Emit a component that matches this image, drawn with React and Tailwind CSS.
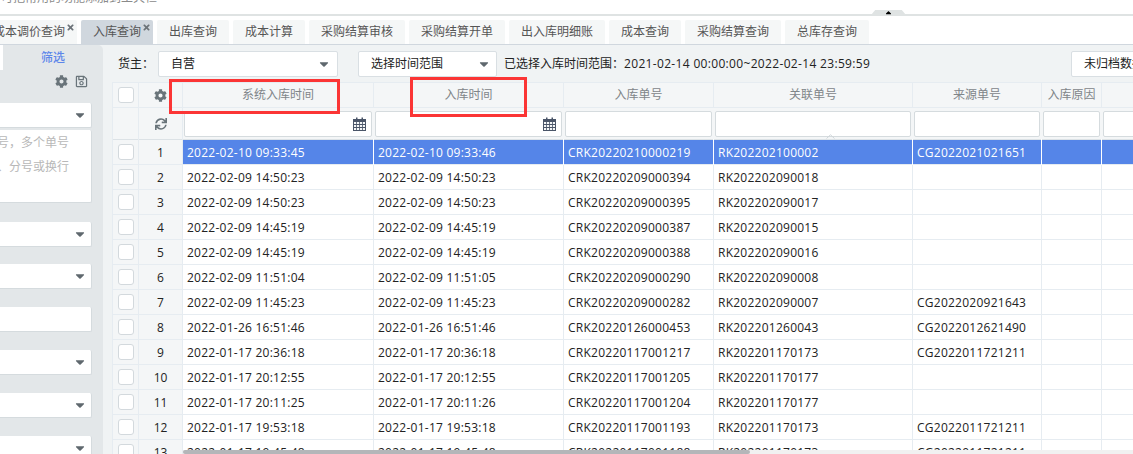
import React from 'react';
import { FaCog, FaRegSave, FaSync, FaCaretDown, FaCaretUp, FaTimes } from 'react-icons/fa';

const tabs = [
  { label: '成本调价查询', width: 'w-[96px]', close: true },
  { label: '入库查询', width: 'w-[72px]', close: true, active: true },
  { label: '出库查询', width: 'w-[72px]' },
  { label: '成本计算', width: 'w-[72px]' },
  { label: '采购结算审核', width: 'w-[96px]' },
  { label: '采购结算开单', width: 'w-[96px]' },
  { label: '出入库明细账', width: 'w-[96px]' },
  { label: '成本查询', width: 'w-[72px]' },
  { label: '采购结算查询', width: 'w-[96px]' },
  { label: '总库存查询', width: 'w-[84px]' },
];

const rows = [
  ['2022-02-10 09:33:45', '2022-02-10 09:33:46', 'CRK20220210000219', 'RK202202100002', 'CG2022021021651'],
  ['2022-02-09 14:50:23', '2022-02-09 14:50:23', 'CRK20220209000394', 'RK202202090018', ''],
  ['2022-02-09 14:50:23', '2022-02-09 14:50:23', 'CRK20220209000395', 'RK202202090017', ''],
  ['2022-02-09 14:45:19', '2022-02-09 14:45:19', 'CRK20220209000387', 'RK202202090015', ''],
  ['2022-02-09 14:45:19', '2022-02-09 14:45:19', 'CRK20220209000388', 'RK202202090016', ''],
  ['2022-02-09 11:51:04', '2022-02-09 11:51:05', 'CRK20220209000290', 'RK202202090008', ''],
  ['2022-02-09 11:45:23', '2022-02-09 11:45:23', 'CRK20220209000282', 'RK202202090007', 'CG2022020921643'],
  ['2022-01-26 16:51:46', '2022-01-26 16:51:46', 'CRK20220126000453', 'RK202201260043', 'CG2022012621490'],
  ['2022-01-17 20:36:18', '2022-01-17 20:36:18', 'CRK20220117001217', 'RK202201170173', 'CG2022011721211'],
  ['2022-01-17 20:12:55', '2022-01-17 20:12:55', 'CRK20220117001205', 'RK202201170177', ''],
  ['2022-01-17 20:11:25', '2022-01-17 20:11:26', 'CRK20220117001204', 'RK202201170177', ''],
  ['2022-01-17 19:53:18', '2022-01-17 19:53:18', 'CRK20220117001193', 'RK202201170173', 'CG2022011721211'],
  ['2022-01-17 19:45:48', '2022-01-17 19:45:48', 'CRK20220117001188', 'RK202201170173', 'CG2022011721211'],
];

const headers = ['系统入库时间', '入库时间', '入库单号', '关联单号', '来源单号', '入库原因', '收'];
const colWidths = ['w-[191px]', 'w-[190px]', 'w-[150px]', 'w-[199px]', 'w-[129px]', 'w-[60px]', 'w-[100px]'];

const Caret = () => <FaCaretDown className="shrink-0 text-[14px] text-[#5f686e]" />;

const CalendarIcon = () => (
  <svg width="13" height="14" viewBox="0 0 13 14" className="shrink-0 text-[#4a5568]">
    <path d="M0 2h13v12H0z" fill="currentColor" />
    <path d="M3 0.5h1.5v3H3zM8.5 0.5H10v3H8.5z" fill="currentColor" />
    <path d="M1 5h2.2v2H1zM4 5h2.2v2H4zM7 5h2.2v2H7zM10 5h2v2h-2zM1 8h2.2v2H1zM4 8h2.2v2H4zM7 8h2.2v2H7zM10 8h2v2h-2zM1 11h2.2v2H1zM4 11h2.2v2H4zM7 11h2.2v2H7zM10 11h2v2h-2z" fill="#f4f6f7" />
  </svg>
);

const SideSelect = ({ className }) => (
  <div className={`flex h-[25px] shrink-0 items-center justify-end rounded-r-[2px] border-r border-b border-[#d5dbde] bg-white pr-[4px] ${className}`}>
    <Caret />
  </div>
);

const Sidebar = () => (
  <div className="relative flex h-full w-[103px] shrink-0 flex-col rounded-tr-[5px] bg-[#e3e7e9]">
    <div className="flex h-[25px] shrink-0 items-center">
      <div className="h-full w-[3px] bg-white" />
      <div className="flex-1 pr-[38px] pl-[38px] text-[12px] font-medium whitespace-nowrap text-[#5d86ea]">筛选</div>
    </div>
    <div className="mt-[5px] flex h-[13px] shrink-0 justify-end gap-[7px] pr-[15px] text-[13px] text-[#69747a]">
      <FaCog />
      <FaRegSave />
    </div>
    <div className="mt-[15px] mr-[11px] flex shrink-0 flex-col">
      <SideSelect />
      <div className="mt-[2px] flex h-[73px] shrink-0 flex-col items-end rounded-r-[2px] border-r border-b border-[#d5dbde] bg-white pt-[1px] pr-[22px] text-[12px] leading-[24px] whitespace-nowrap text-[#b8b8b8]">
        <span>请输入单号，多个单号</span>
        <span>之间用逗号、分号或换行</span>
      </div>
      <SideSelect className="mt-[19px]" />
      <SideSelect className="mt-[17px]" />
      <div className="mt-[18px] h-[25px] shrink-0 rounded-r-[2px] border-r border-b border-[#d5dbde] bg-white" />
      <SideSelect className="mt-[18px]" />
      <SideSelect className="mt-[18px]" />
      <SideSelect className="mt-[18px]" />
    </div>
  </div>
);

const Toolbar = () => (
  <div className="flex h-[37px] shrink-0 items-center pt-[1px] text-[12px] whitespace-nowrap text-[#222]">
    <span className="ml-[6px] w-[40px] shrink-0">货主：</span>
    <div className="flex h-[26px] w-[180px] shrink-0 items-center justify-between rounded-[2px] border border-[#d9dfe3] bg-white pr-[6px] pl-[12px]">
      <span>自营</span>
      <Caret />
    </div>
    <div className="ml-[20px] flex h-[26px] w-[139px] shrink-0 items-center justify-between rounded-[2px] border border-[#d9dfe3] bg-white pr-[5px] pl-[12px]">
      <span>选择时间范围</span>
      <Caret />
    </div>
    <span className="ml-[7px] w-[567px] shrink-0">
      已选择入库时间范围：<span className="tracking-[0.33px]">2021-02-14 00:00:00~2022-02-14 23:59:59</span>
    </span>
    <div className="flex h-[26px] w-[100px] shrink-0 items-center rounded-[2px] border border-[#d9dfe3] bg-white pl-[12px]">未归档数据</div>
  </div>
);

const Checkbox = () => <div className="mx-auto h-[16px] w-[16px] rounded-[3px] border border-[#d3d9dd] bg-white" />;

const DataTable = () => (
  <table className="w-[1089px] max-w-none shrink-0 table-fixed border-collapse text-[12px]">
    <colgroup>
      <col className="w-[26px]" />
      <col className="w-[44px]" />
      {colWidths.map((w) => <col key={w} className={w} />)}
    </colgroup>
    <thead className="bg-[#f4f6f7] font-normal text-[#7f8589]">
      <tr className="h-[25px] border-y border-[#e6ecf1]">
        <th className="border-x border-[#e6ecf1] font-normal"><Checkbox /></th>
        <th className="border-r border-[#e6ecf1] font-normal"><FaCog className="mx-auto text-[13px] text-[#69747a]" /></th>
        {headers.map((h) => (
          <th key={h} className="overflow-hidden border-r border-[#e6ecf1] font-normal whitespace-nowrap">{h}</th>
        ))}
      </tr>
      <tr className="h-[32px] border-b border-[#dce2e6]">
        <th className="border-x border-[#e6ecf1]" />
        <th className="border-r border-[#e6ecf1]"><FaSync className="mx-auto text-[12px] text-[#69747a]" /></th>
        {headers.map((h, i) => (
          <th key={h} className="pr-[2px] pl-[1px] align-middle font-normal">
            <div className="flex h-[26px] items-center justify-end rounded-[2px] border border-[#d5dbde] bg-white pr-[5px]">
              {i < 2 && <CalendarIcon />}
            </div>
          </th>
        ))}
      </tr>
    </thead>
    <tbody>
      {rows.map((row, i) => (
        <tr key={i} className="h-[25px] border-b border-[#e6ecf1]">
          <td className="border-x border-[#e6ecf1] bg-[#f4f6f7]"><Checkbox /></td>
          <td className="border-r border-[#e6ecf1] bg-[#f4f6f7] pt-[1px] text-center text-[#222]">{i + 1}</td>
          {[...row, '', ''].map((cell, j) => (
            <td
              key={j}
              className={
                i === 0
                  ? 'border-r border-white bg-[#5585e8] pt-[1px] pl-[4px] tracking-[0.25px] whitespace-nowrap text-white'
                  : 'border-r border-[#e6ecf1] bg-white pt-[1px] pl-[4px] tracking-[0.25px] whitespace-nowrap text-[#222]'
              }
            >
              {cell}
            </td>
          ))}
        </tr>
      ))}
    </tbody>
  </table>
);

const App = () => (
  <div
    className="relative flex h-[454px] w-[1133px] flex-col overflow-hidden bg-white"
    style={{ fontFamily: '"Open Sans", "Noto Sans CJK SC", sans-serif' }}
  >
    <div className="h-[16px] shrink-0 overflow-hidden border-b-2 border-[#dfe3e3]">
      <div className="mt-[-11px] ml-[1px] text-[12px] whitespace-nowrap text-[#8a8a8a]">可把常用的功能添加到工具栏</div>
    </div>
    <div className="mt-[4px] ml-[-19px] flex h-[25px] shrink-0 gap-[4px] border-b border-[#d0d7de]">
      {tabs.map((t) => (
        <div
          key={t.label}
          className={`relative flex shrink-0 items-center justify-center rounded-t-[2px] text-[12px] text-[#555] ${t.width} ${t.active ? 'bg-[#d0d7de]' : 'bg-[#f5f7f7]'}`}
        >
          {t.label}
          {t.close && <FaTimes className="absolute top-[3px] right-[2px] text-[9px] text-[#6b7278]" />}
        </div>
      ))}
    </div>
    <div className="flex min-h-0 flex-1 bg-[#f0f3f4]">
      <Sidebar />
      <div className="ml-[9px] flex min-w-0 flex-1 flex-col overflow-hidden">
        <Toolbar />
        <DataTable />
      </div>
    </div>

    {/* handle on the top line */}
    <div className="absolute top-[10px] left-[871px] flex h-[5px] w-[35px] items-center justify-center bg-[#dfe3e3] [clip-path:polygon(12%_0,88%_0,100%_100%,0_100%)]">
      <FaCaretUp className="text-[9px] text-black" />
    </div>
    <svg width="9" height="5" viewBox="0 0 9 5" className="absolute top-[134px] left-[826px] text-[#cfd5d9]">
      <path d="M0.5 4.5L4.5 0.8L8.5 4.5" fill="none" stroke="currentColor" />
    </svg>

    {/* red annotation boxes */}
    <div className="absolute top-[79px] left-[169px] h-[35px] w-[171px] border-[3px] border-[#fb3535]" />
    <div className="absolute top-[77px] left-[410px] h-[40px] w-[117px] border-[3px] border-[#fb3535]" />

    {/* horizontal scrollbar */}
    <div className="absolute bottom-0 left-[183px] h-[4px] w-[950px] bg-[#f1f1f1]">
      <div className="h-full w-[567px] rounded-full bg-[#b4b6b9]" />
    </div>
  </div>
);

export default App;
